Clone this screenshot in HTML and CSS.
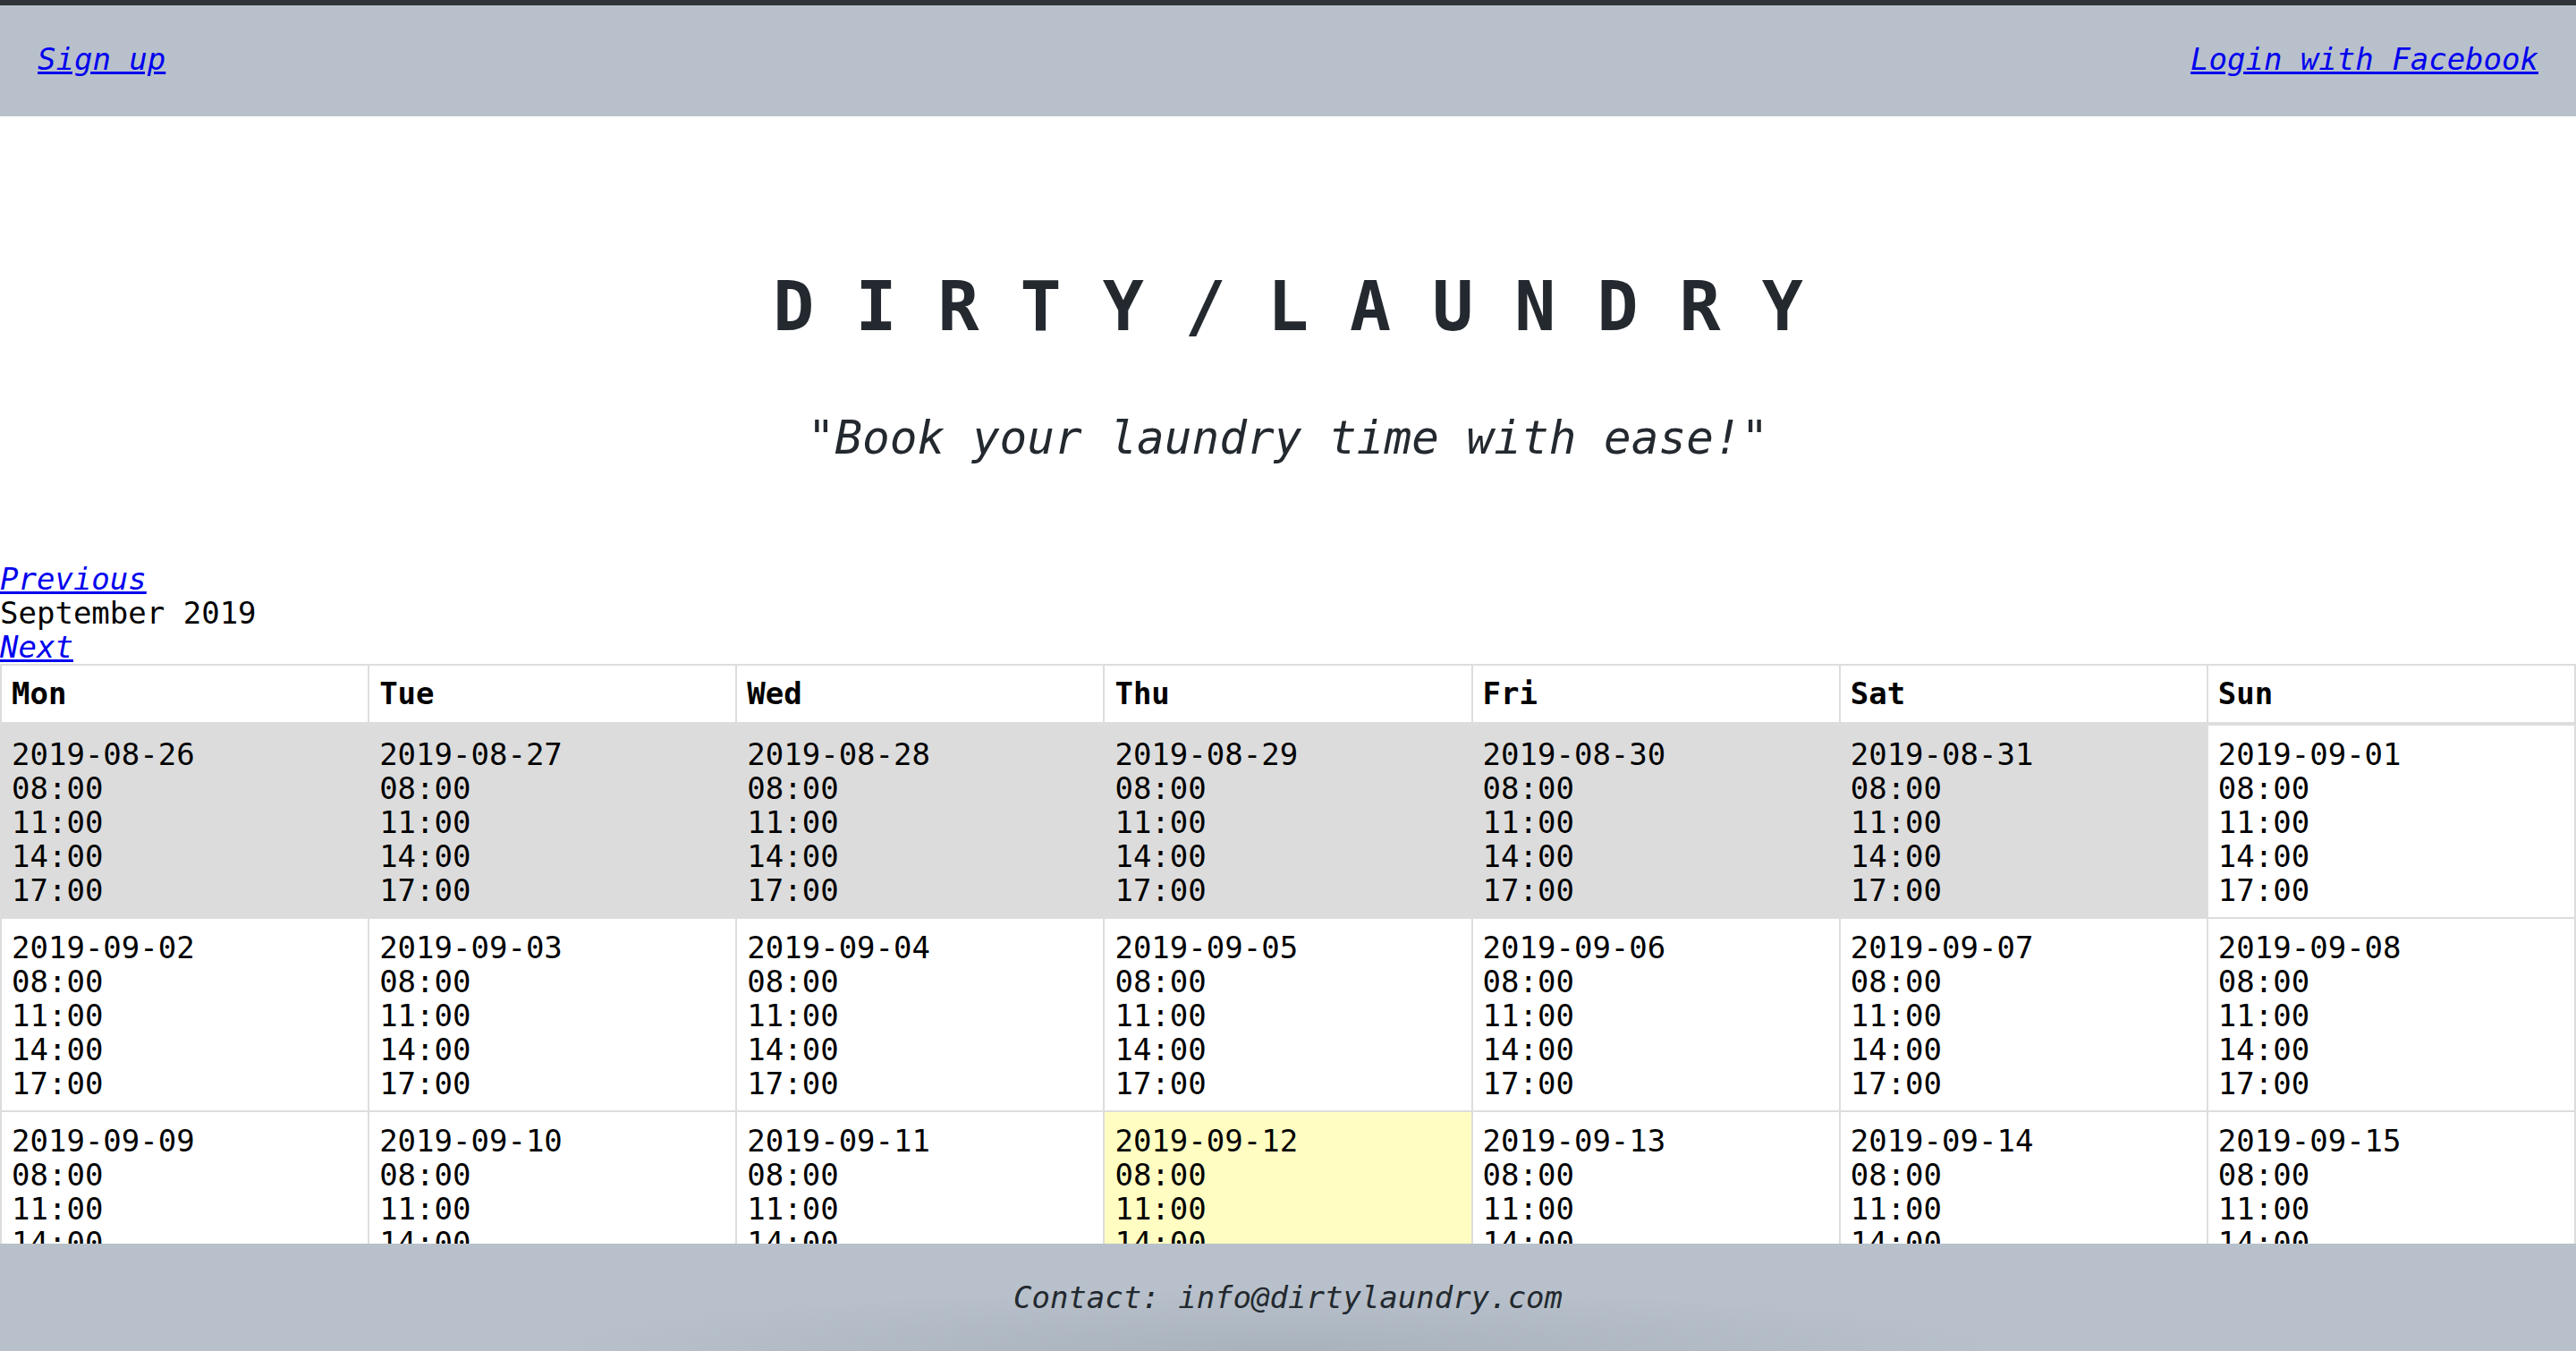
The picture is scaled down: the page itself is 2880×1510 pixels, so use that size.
FILE: index.html
```html
<!DOCTYPE html>
<html lang="en">
<head>
<meta charset="utf-8">
<title>Dirty Laundry</title>
<link rel="stylesheet" href="styles.css">
</head>
<body>
<header class="topbar">
  <a href="#">Sign up</a>
  <a href="#">Login with Facebook</a>
</header>
<main class="page">
  <h1 class="brand">D I R T Y / L A U N D R Y</h1>
  <p class="tagline">"Book your laundry time with ease!"</p>
  <nav class="month-nav">
    <a href="#">Previous</a>
    <div class="month-label">September 2019</div>
    <a href="#">Next</a>
  </nav>
  <table class="calendar">
    <thead>
      <tr><th>Mon</th><th>Tue</th><th>Wed</th><th>Thu</th><th>Fri</th><th>Sat</th><th>Sun</th></tr>
    </thead>
    <tbody>
      <tr>
        <td class="other"><div>2019-08-26</div><div>08:00</div><div>11:00</div><div>14:00</div><div>17:00</div></td>
        <td class="other"><div>2019-08-27</div><div>08:00</div><div>11:00</div><div>14:00</div><div>17:00</div></td>
        <td class="other"><div>2019-08-28</div><div>08:00</div><div>11:00</div><div>14:00</div><div>17:00</div></td>
        <td class="other"><div>2019-08-29</div><div>08:00</div><div>11:00</div><div>14:00</div><div>17:00</div></td>
        <td class="other"><div>2019-08-30</div><div>08:00</div><div>11:00</div><div>14:00</div><div>17:00</div></td>
        <td class="other"><div>2019-08-31</div><div>08:00</div><div>11:00</div><div>14:00</div><div>17:00</div></td>
        <td><div>2019-09-01</div><div>08:00</div><div>11:00</div><div>14:00</div><div>17:00</div></td>
      </tr>
      <tr>
        <td><div>2019-09-02</div><div>08:00</div><div>11:00</div><div>14:00</div><div>17:00</div></td>
        <td><div>2019-09-03</div><div>08:00</div><div>11:00</div><div>14:00</div><div>17:00</div></td>
        <td><div>2019-09-04</div><div>08:00</div><div>11:00</div><div>14:00</div><div>17:00</div></td>
        <td><div>2019-09-05</div><div>08:00</div><div>11:00</div><div>14:00</div><div>17:00</div></td>
        <td><div>2019-09-06</div><div>08:00</div><div>11:00</div><div>14:00</div><div>17:00</div></td>
        <td><div>2019-09-07</div><div>08:00</div><div>11:00</div><div>14:00</div><div>17:00</div></td>
        <td><div>2019-09-08</div><div>08:00</div><div>11:00</div><div>14:00</div><div>17:00</div></td>
      </tr>
      <tr>
        <td><div>2019-09-09</div><div>08:00</div><div>11:00</div><div>14:00</div><div>17:00</div></td>
        <td><div>2019-09-10</div><div>08:00</div><div>11:00</div><div>14:00</div><div>17:00</div></td>
        <td><div>2019-09-11</div><div>08:00</div><div>11:00</div><div>14:00</div><div>17:00</div></td>
        <td class="today"><div>2019-09-12</div><div>08:00</div><div>11:00</div><div>14:00</div><div>17:00</div></td>
        <td><div>2019-09-13</div><div>08:00</div><div>11:00</div><div>14:00</div><div>17:00</div></td>
        <td><div>2019-09-14</div><div>08:00</div><div>11:00</div><div>14:00</div><div>17:00</div></td>
        <td><div>2019-09-15</div><div>08:00</div><div>11:00</div><div>14:00</div><div>17:00</div></td>
      </tr>
      <tr>
        <td><div>2019-09-16</div><div>08:00</div><div>11:00</div><div>14:00</div><div>17:00</div></td>
        <td><div>2019-09-17</div><div>08:00</div><div>11:00</div><div>14:00</div><div>17:00</div></td>
        <td><div>2019-09-18</div><div>08:00</div><div>11:00</div><div>14:00</div><div>17:00</div></td>
        <td><div>2019-09-19</div><div>08:00</div><div>11:00</div><div>14:00</div><div>17:00</div></td>
        <td><div>2019-09-20</div><div>08:00</div><div>11:00</div><div>14:00</div><div>17:00</div></td>
        <td><div>2019-09-21</div><div>08:00</div><div>11:00</div><div>14:00</div><div>17:00</div></td>
        <td><div>2019-09-22</div><div>08:00</div><div>11:00</div><div>14:00</div><div>17:00</div></td>
      </tr>
      <tr>
        <td><div>2019-09-23</div><div>08:00</div><div>11:00</div><div>14:00</div><div>17:00</div></td>
        <td><div>2019-09-24</div><div>08:00</div><div>11:00</div><div>14:00</div><div>17:00</div></td>
        <td><div>2019-09-25</div><div>08:00</div><div>11:00</div><div>14:00</div><div>17:00</div></td>
        <td><div>2019-09-26</div><div>08:00</div><div>11:00</div><div>14:00</div><div>17:00</div></td>
        <td><div>2019-09-27</div><div>08:00</div><div>11:00</div><div>14:00</div><div>17:00</div></td>
        <td><div>2019-09-28</div><div>08:00</div><div>11:00</div><div>14:00</div><div>17:00</div></td>
        <td><div>2019-09-29</div><div>08:00</div><div>11:00</div><div>14:00</div><div>17:00</div></td>
      </tr>
    </tbody>
  </table>
</main>
<footer class="contact">Contact: info@dirtylaundry.com</footer>
</body>
</html>
```
FILE: styles.css
```css
html, body {
  margin: 0;
  padding: 0;
}

body {
  border-top: 6px solid #303438;
  background: #ffffff;
  color: #000000;
  font-family: "DejaVu Sans Mono", "Liberation Mono", monospace;
  font-size: 34px;
  line-height: 38px;
}

a {
  color: #0000ee;
  font-style: italic;
  text-decoration: underline;
}

.topbar {
  display: flex;
  justify-content: space-between;
  align-items: center;
  background: #b8c1cb;
  padding: 41px 42px 45px;
}

.page {
  padding-bottom: 140px;
}

.brand {
  margin: 168px 0 0;
  font-size: 76.5px;
  line-height: 90px;
  font-weight: bold;
  text-align: center;
  color: #23292f;
  white-space: pre;
}

.tagline {
  margin: 72px 0 0;
  font-size: 51px;
  line-height: 60px;
  font-style: italic;
  text-align: center;
  color: #23292f;
}

.month-nav {
  margin-top: 108px;
  display: flex;
  flex-direction: column;
  align-items: flex-start;
}

.calendar {
  width: 100%;
  table-layout: fixed;
  border-collapse: collapse;
}

.calendar th,
.calendar td {
  border: 2px solid #dddddd;
  padding: 13px 12px 11px 11px;
  text-align: left;
  vertical-align: top;
}

.calendar th {
  font-weight: bold;
  border-bottom-width: 4px;
  padding: 12px 12px 13px 11px;
}

.calendar td.other {
  background: #dcdcdc;
}

.calendar td.today {
  background: #fffdc2;
}

.contact {
  position: fixed;
  left: 0;
  right: 0;
  bottom: 0;
  height: 120px;
  display: flex;
  align-items: center;
  justify-content: center;
  background: radial-gradient(ellipse 820px 70px at 1430px 100%, rgba(60, 70, 85, 0.12), rgba(60, 70, 85, 0) 100%), #b8c1cb;
  color: #23292f;
  font-style: italic;
}
```
